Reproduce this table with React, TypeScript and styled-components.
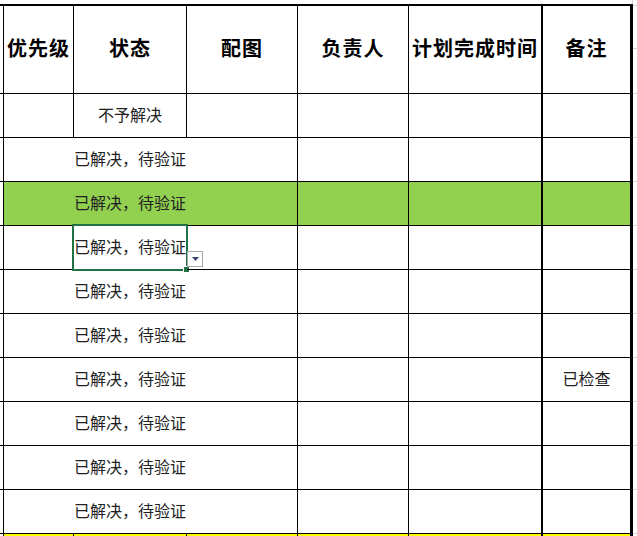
import React from 'react';
import styled, { createGlobalStyle } from 'styled-components';

const GlobalStyle = createGlobalStyle`
  html, body { margin: 0; padding: 0; background: #fff; overflow: hidden; }
  body { font-family: "Noto Sans CJK SC", "Noto Sans", sans-serif; }
  #root { width: 637px; height: 536px; overflow: hidden; }
`;

type Edge = 'none' | 'thin' | 'bold' | 'heavy' | 'grid';
const edge = (e: Edge) =>
  e === 'thin'
    ? '1px solid #000'
    : e === 'bold'
    ? '2px solid #000'
    : e === 'heavy'
    ? '3px solid #000'
    : e === 'grid'
    ? '1px solid #d4d4d4'
    : '0';

const COLS = '4px 70px 113px 111px 111px 134px 90px 4px';

const Sheet = styled.div`
  width: 637px;
  height: 536px;
  display: flex;
  flex-direction: column;
  overflow: hidden;
  background: #fff;
`;

const Row = styled.div<{ $h: number }>`
  display: grid;
  grid-template-columns: ${COLS};
  height: ${(p) => p.$h}px;
  flex: none;
`;

const Cell = styled.div<{
  $right?: Edge;
  $bottom?: Edge;
  $top?: Edge;
  $fill?: string;
  $align?: 'center' | 'left';
}>`
  box-sizing: border-box;
  position: relative;
  display: flex;
  align-items: center;
  justify-content: ${(p) => (p.$align === 'left' ? 'flex-start' : 'center')};
  border-right: ${(p) => edge(p.$right ?? 'none')};
  border-bottom: ${(p) => edge(p.$bottom ?? 'none')};
  border-top: ${(p) => edge(p.$top ?? 'none')};
  background: ${(p) => p.$fill ?? 'transparent'};
  white-space: nowrap;
  min-width: 0;
`;

const GutterStack = styled.div`
  display: flex;
  flex-direction: column;
`;

const GutterSeg = styled.div<{ $h: number }>`
  box-sizing: border-box;
  height: ${(p) => p.$h}px;
  border-bottom: 1px solid #d4d4d4;
  flex: none;
`;

const HeadText = styled.span`
  font-size: 20px;
  font-weight: 700;
  letter-spacing: 1px;
  color: #000;
  line-height: 1;
  padding-bottom: 4px;
`;

const BodyText = styled.span`
  font-size: 16px;
  font-weight: 400;
  color: #222;
  line-height: 1;
  padding-bottom: 3px;
`;

const Selection = styled.div`
  position: absolute;
  left: -2px;
  top: -2px;
  width: 116px;
  height: 47px;
  box-sizing: border-box;
  border: 2px solid #217346;
  pointer-events: none;
`;

const FillHandle = styled.div`
  position: absolute;
  left: 110px;
  top: 41px;
  width: 5px;
  height: 5px;
  background: #217346;
  box-shadow: 0 0 0 1px #fff;
`;

const DropButton = styled.div`
  position: absolute;
  left: 113px;
  top: 25px;
  width: 16px;
  height: 16px;
  box-sizing: border-box;
  border: 1px solid #a8a8a8;
  background: #fff;
  display: flex;
  align-items: center;
  justify-content: center;
`;

const headers = ['优先级', '状态', '配图', '负责人', '计划完成时间', '备注'];
const rightEdges: Edge[] = ['thin', 'thin', 'thin', 'thin', 'bold', 'heavy'];

type BodyRow = {
  status: string;
  align: 'center' | 'left';
  split: boolean;
  fill?: string;
  selected?: boolean;
  note?: string;
};

const rows: BodyRow[] = [
  { status: '不予解决', align: 'center', split: true },
  { status: '已解决，待验证', align: 'left', split: false },
  { status: '已解决，待验证', align: 'left', split: false, fill: '#92d050' },
  { status: '已解决，待验证', align: 'left', split: false, selected: true },
  { status: '已解决，待验证', align: 'left', split: false },
  { status: '已解决，待验证', align: 'left', split: false },
  { status: '已解决，待验证', align: 'left', split: false, note: '已检查' },
  { status: '已解决，待验证', align: 'left', split: false },
  { status: '已解决，待验证', align: 'left', split: false },
  { status: '已解决，待验证', align: 'left', split: false },
];

const Arrow = () => (
  <svg width="7" height="4" viewBox="0 0 7 4">
    <polygon points="0,0 7,0 3.5,4" fill="#3b4173" />
  </svg>
);

export default function App() {
  return (
    <>
      <GlobalStyle />
      <Sheet>
        <Row $h={4}>
          <Cell />
          <Cell />
          <Cell />
          <Cell />
          <Cell />
          <Cell />
          <Cell $right="grid" />
          <Cell />
        </Row>
        <Row $h={90}>
          <Cell $top="bold" $right="thin" $bottom="thin" />
          {headers.map((h, i) => (
            <Cell key={h} $top="bold" $right={rightEdges[i]} $bottom="thin">
              <HeadText>{h}</HeadText>
            </Cell>
          ))}
          <GutterStack>
            <GutterSeg $h={2} />
            <GutterSeg $h={43} />
            <GutterSeg $h={45} />
          </GutterStack>
        </Row>
        {rows.map((r, idx) => (
          <Row key={idx} $h={44}>
            <Cell $right="thin" $bottom="thin" />
            <Cell $right={r.split ? 'thin' : 'none'} $bottom="thin" $fill={r.fill} />
            <Cell
              $right={r.split ? 'thin' : 'none'}
              $bottom="thin"
              $fill={r.fill}
              $align={r.align}
            >
              <BodyText>{r.status}</BodyText>
              {r.selected && (
                <>
                  <Selection />
                  <FillHandle />
                  <DropButton>
                    <Arrow />
                  </DropButton>
                </>
              )}
            </Cell>
            <Cell $right="thin" $bottom="thin" $fill={r.fill} />
            <Cell $right="thin" $bottom="thin" $fill={r.fill} />
            <Cell $right="bold" $bottom="thin" $fill={r.fill} />
            <Cell $right="heavy" $bottom="thin" $fill={r.fill}>
              {r.note && <BodyText>{r.note}</BodyText>}
            </Cell>
            <GutterSeg $h={44} />
          </Row>
        ))}
        <Row $h={44}>
          <Cell $right="thin" />
          <Cell $right="thin" $fill="#ffff00" />
          <Cell $right="thin" $fill="#ffff00" />
          <Cell $right="thin" $fill="#ffff00" />
          <Cell $right="thin" $fill="#ffff00" />
          <Cell $right="bold" $fill="#ffff00" />
          <Cell $right="heavy" $fill="#ffff00" />
          <Cell />
        </Row>
      </Sheet>
    </>
  );
}
